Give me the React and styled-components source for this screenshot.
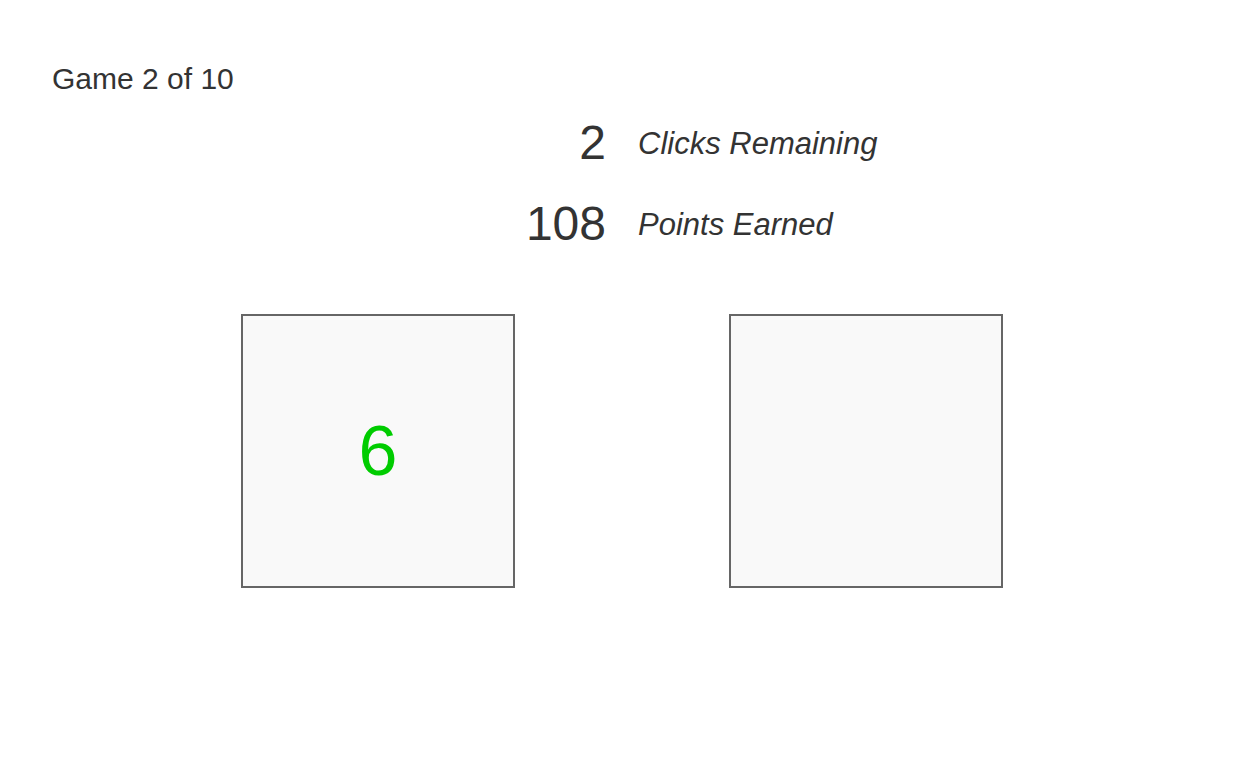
import React from "react";
import styled, { createGlobalStyle } from "styled-components";

const Global = createGlobalStyle`
  html, body { margin: 0; padding: 0; background: #ffffff; }
  body { font-family: "Liberation Sans", Arial, sans-serif; color: #333333; }
`;

const Page = styled.div`
  width: 1238px;
  min-height: 764px;
  box-sizing: border-box;
  padding-top: 64px;
  display: flex;
  flex-direction: column;
`;

const GameLabel = styled.div`
  font-size: 30px;
  line-height: 30px;
  height: 30px;
  padding-left: 52px;
`;

const Stats = styled.div`
  display: grid;
  grid-template-columns: 1fr 1fr;
  column-gap: 31px;
  row-gap: 25px;
  align-items: center;
  margin-top: 21px;
  padding-left: 5px;
  box-sizing: border-box;
  width: 100%;
`;

const Num = styled.div`
  font-size: 48px;
  line-height: 56px;
  justify-self: end;
`;

const Label = styled.div`
  font-size: 31px;
  line-height: 34px;
  font-style: italic;
  justify-self: start;
  padding-top: 1px;
  margin-left: 1px;
`;

const Boxes = styled.div`
  display: flex;
  justify-content: center;
  gap: 214px;
  margin-top: 62px;
  width: 100%;
  padding-left: 6px;
  box-sizing: border-box;
`;

const Card = styled.div`
  width: 274px;
  height: 274px;
  box-sizing: border-box;
  border: 2px solid #666666;
  background: #f9f9f9;
  display: flex;
  align-items: center;
  justify-content: center;
  font-size: 70px;
  color: ${(p) => p.$color || "#00cc00"};
`;

export default function App() {
  return (
    <>
      <Global />
      <Page>
        <GameLabel>Game 2 of 10</GameLabel>
        <Stats>
          <Num>2</Num>
          <Label>Clicks Remaining</Label>
          <Num>108</Num>
          <Label>Points Earned</Label>
        </Stats>
        <Boxes>
          <Card>6</Card>
          <Card />
        </Boxes>
      </Page>
    </>
  );
}
